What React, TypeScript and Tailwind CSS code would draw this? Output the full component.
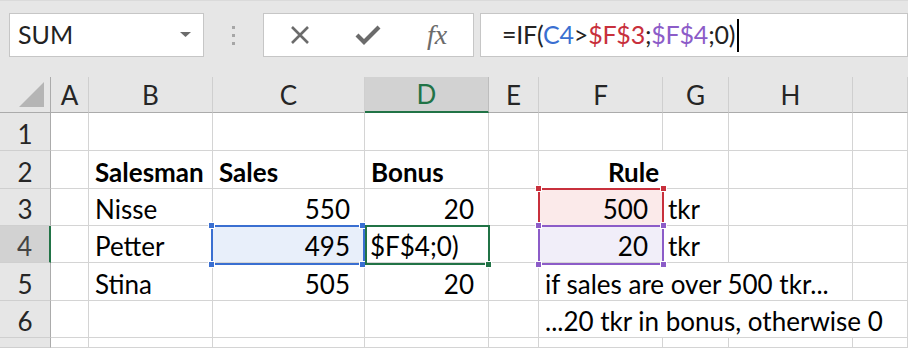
import React from 'react';

const font = { fontFamily: 'Lato, "Noto Sans", sans-serif' };

const cols = ['A', 'B', 'C', 'D', 'E', 'F', 'G', 'H', ''];
const rowHeights = ['h-[38px]', 'h-[38px]', 'h-[37px]', 'h-[37px]', 'h-[38px]', 'h-[37px]', 'h-[10px]'];

type CellProps = {
    children?: React.ReactNode;
    className?: string;
};

function Cell({ children, className = '' }: CellProps) {
    return (
        <div className={`border-r border-b border-[#d4d4d4] flex items-end pb-[3px] px-[6px] whitespace-nowrap overflow-visible text-[26px] leading-none text-black ${className}`}>
            {children}
        </div>
    );
}

function Handle({ className }: { className: string }) {
    return <div className={`absolute w-[7px] h-[7px] border border-white ${className}`} />;
}

export default function App() {
    return (
        <div className="w-[908px] h-[348px] overflow-hidden bg-white" style={font}>
            {/* formula bar */}
            <div className="h-[77px] bg-[#e6e6e6] border-t border-[#dadada] flex items-start pt-[12px] pl-[9px]">
                <div className="w-[195px] h-[44px] bg-white border border-[#c6c6c6] flex items-center pl-[8px] pr-[12px] justify-between">
                    <span className="text-[25px] text-[#222]">SUM</span>
                    <svg width="11" height="6" viewBox="0 0 11 6">
                        <path d="M0 0 L11 0 L5.5 5 Z" fill="#6b6b6b" />
                    </svg>
                </div>
                <div className="w-[59px] h-[44px] flex flex-col items-center justify-center gap-[5px]">
                    <div className="w-[3px] h-[3px] bg-[#a6a6a6]" />
                    <div className="w-[3px] h-[3px] bg-[#a6a6a6]" />
                    <div className="w-[3px] h-[3px] bg-[#a6a6a6]" />
                </div>
                <div className="w-[211px] h-[44px] bg-white border border-[#c6c6c6] flex items-center pl-[25px]">
                    <svg width="22" height="22" viewBox="0 0 22 22">
                        <path d="M3 3 L19 19 M19 3 L3 19" stroke="#6b6b6b" strokeWidth="2.6" />
                    </svg>
                    <svg width="26" height="22" viewBox="0 0 26 22" className="ml-[44px]">
                        <path d="M2 11 L9 18 L24 3" stroke="#6b6b6b" strokeWidth="4.2" fill="none" strokeLinejoin="miter" />
                    </svg>
                    <span className="ml-[46px] text-[28px] italic text-[#6b6b6b] leading-none" style={{ fontFamily: '"Liberation Serif", serif' }}>fx</span>
                </div>
                <div className="ml-[6px] flex-1 h-[44px] bg-white border border-[#c6c6c6] flex items-center pl-[21px]">
                    <span className="text-[25px] text-[#222] tracking-[-0.2px]">
                        =IF(<span className="text-[#3a6fd1]">C4</span>&gt;<span className="text-[#c8303c]">$F$3</span>;<span className="text-[#8c5cc8]">$F$4</span>;0)
                    </span>
                    <div className="w-[2px] h-[33px] bg-black ml-[2px]" />
                </div>
            </div>

            {/* sheet */}
            <div className="relative grid grid-cols-[51px_38px_124px_152px_124px_50px_124px_66px_124px_55px]">
                {/* header row */}
                <div className="h-[36px] bg-[#e6e6e6] border-r border-b border-[#ababab] flex items-end justify-end pr-[6px] pb-[5px]">
                    <svg width="25" height="25" viewBox="0 0 25 25">
                        <path d="M25 0 L25 25 L0 25 Z" fill="#b5b5b5" />
                    </svg>
                </div>
                {cols.map((c) => (
                    <div
                        key={c}
                        className={`h-[36px] border-r flex items-end justify-center pb-[4px] text-[26px] leading-none ${
                            c === 'D'
                                ? 'bg-[#d2d2d2] border-b-2 border-b-[#217346] border-r-[#bdbdbd] text-[#217346]'
                                : 'bg-[#e6e6e6] border-b border-b-[#ababab] border-r-[#cfcfcf] text-[#262626]'
                        }`}
                    >
                        {c}
                    </div>
                ))}

                {/* row 1 */}
                <RowHead n={1} h={rowHeights[0]} />
                <Cell /><Cell /><Cell /><Cell /><Cell /><Cell /><Cell /><Cell /><Cell />

                {/* row 2 */}
                <RowHead n={2} h={rowHeights[1]} />
                <Cell />
                <Cell className="font-bold">Salesman</Cell>
                <Cell className="font-bold">Sales</Cell>
                <Cell className="font-bold">Bonus</Cell>
                <Cell />
                <Cell className="col-span-2 justify-center font-bold">Rule</Cell>
                <Cell /><Cell />

                {/* row 3 */}
                <RowHead n={3} h={rowHeights[2]} />
                <Cell />
                <Cell>Nisse</Cell>
                <Cell className="justify-end pr-[14px]">550</Cell>
                <Cell className="justify-end pr-[14px]">20</Cell>
                <Cell />
                <Cell className="justify-end pr-[14px] bg-[#fbeaea]">500</Cell>
                <Cell className="pl-[5px]">tkr</Cell>
                <Cell /><Cell />

                {/* row 4 */}
                <RowHead n={4} h={rowHeights[3]} active />
                <Cell />
                <Cell>Petter</Cell>
                <Cell className="justify-end pr-[14px] bg-[#e8effa]">495</Cell>
                <Cell className="pl-[5px]">$F$4;0)</Cell>
                <Cell />
                <Cell className="justify-end pr-[14px] bg-[#f1eef9]">20</Cell>
                <Cell className="pl-[5px]">tkr</Cell>
                <Cell /><Cell />

                {/* row 5 */}
                <RowHead n={5} h={rowHeights[4]} />
                <Cell />
                <Cell>Stina</Cell>
                <Cell className="justify-end pr-[14px]">505</Cell>
                <Cell className="justify-end pr-[14px]">20</Cell>
                <Cell />
                <Cell className="col-span-3">if sales are over 500 tkr...</Cell>
                <Cell />

                {/* row 6 */}
                <RowHead n={6} h={rowHeights[5]} />
                <Cell />
                <Cell />
                <Cell />
                <Cell />
                <Cell />
                <Cell className="col-span-4">...20 tkr in bonus, otherwise 0</Cell>

                {/* row 7, cut by window edge */}
                <RowHead h={rowHeights[6]} />
                <Cell /><Cell /><Cell /><Cell /><Cell /><Cell /><Cell /><Cell /><Cell />

                {/* C4 reference */}
                <div className="absolute left-[211px] top-[148px] w-[154px] h-[40px] border-2 border-[#3a6fd1]" />
                <Handle className="left-[208px] top-[145px] bg-[#3a6fd1]" />
                <Handle className="left-[359px] top-[145px] bg-[#3a6fd1]" />
                <Handle className="left-[208px] top-[184px] bg-[#3a6fd1]" />
                <Handle className="left-[359px] top-[184px] bg-[#3a6fd1]" />

                {/* D4 active cell */}
                <div className="absolute left-[365px] top-[148px] w-[125px] h-[40px] border-2 border-[#217346]" />
                <div className="absolute left-[485px] top-[184px] w-[7px] h-[7px] bg-[#217346] border border-white" />

                {/* F3 reference */}
                <div className="absolute left-[538px] top-[111px] w-[126px] h-[39px] border-2 border-b-0 border-[#c8303c]" />
                <Handle className="left-[535px] top-[108px] bg-[#c8303c]" />
                <Handle className="left-[660px] top-[108px] bg-[#c8303c]" />

                {/* F4 reference */}
                <div className="absolute left-[538px] top-[148px] w-[126px] h-[40px] border-2 border-[#8c5cc8]" />
                <Handle className="left-[535px] top-[145px] bg-[#8c5cc8]" />
                <Handle className="left-[660px] top-[145px] bg-[#8c5cc8]" />
                <Handle className="left-[535px] top-[184px] bg-[#8c5cc8]" />
                <Handle className="left-[660px] top-[184px] bg-[#8c5cc8]" />
            </div>
        </div>
    );
}

function RowHead({ n, h, active = false }: { n?: number; h: string; active?: boolean }) {
    return (
        <div
            className={`${h} border-b border-b-[#cfcfcf] flex items-end justify-center pb-[3px] text-[26px] leading-none overflow-hidden ${
                active
                    ? 'bg-[#d2d2d2] border-r-2 border-r-[#217346] text-[#444]'
                    : 'bg-[#e6e6e6] border-r border-r-[#ababab] text-[#262626]'
            }`}
        >
            {n}
        </div>
    );
}
